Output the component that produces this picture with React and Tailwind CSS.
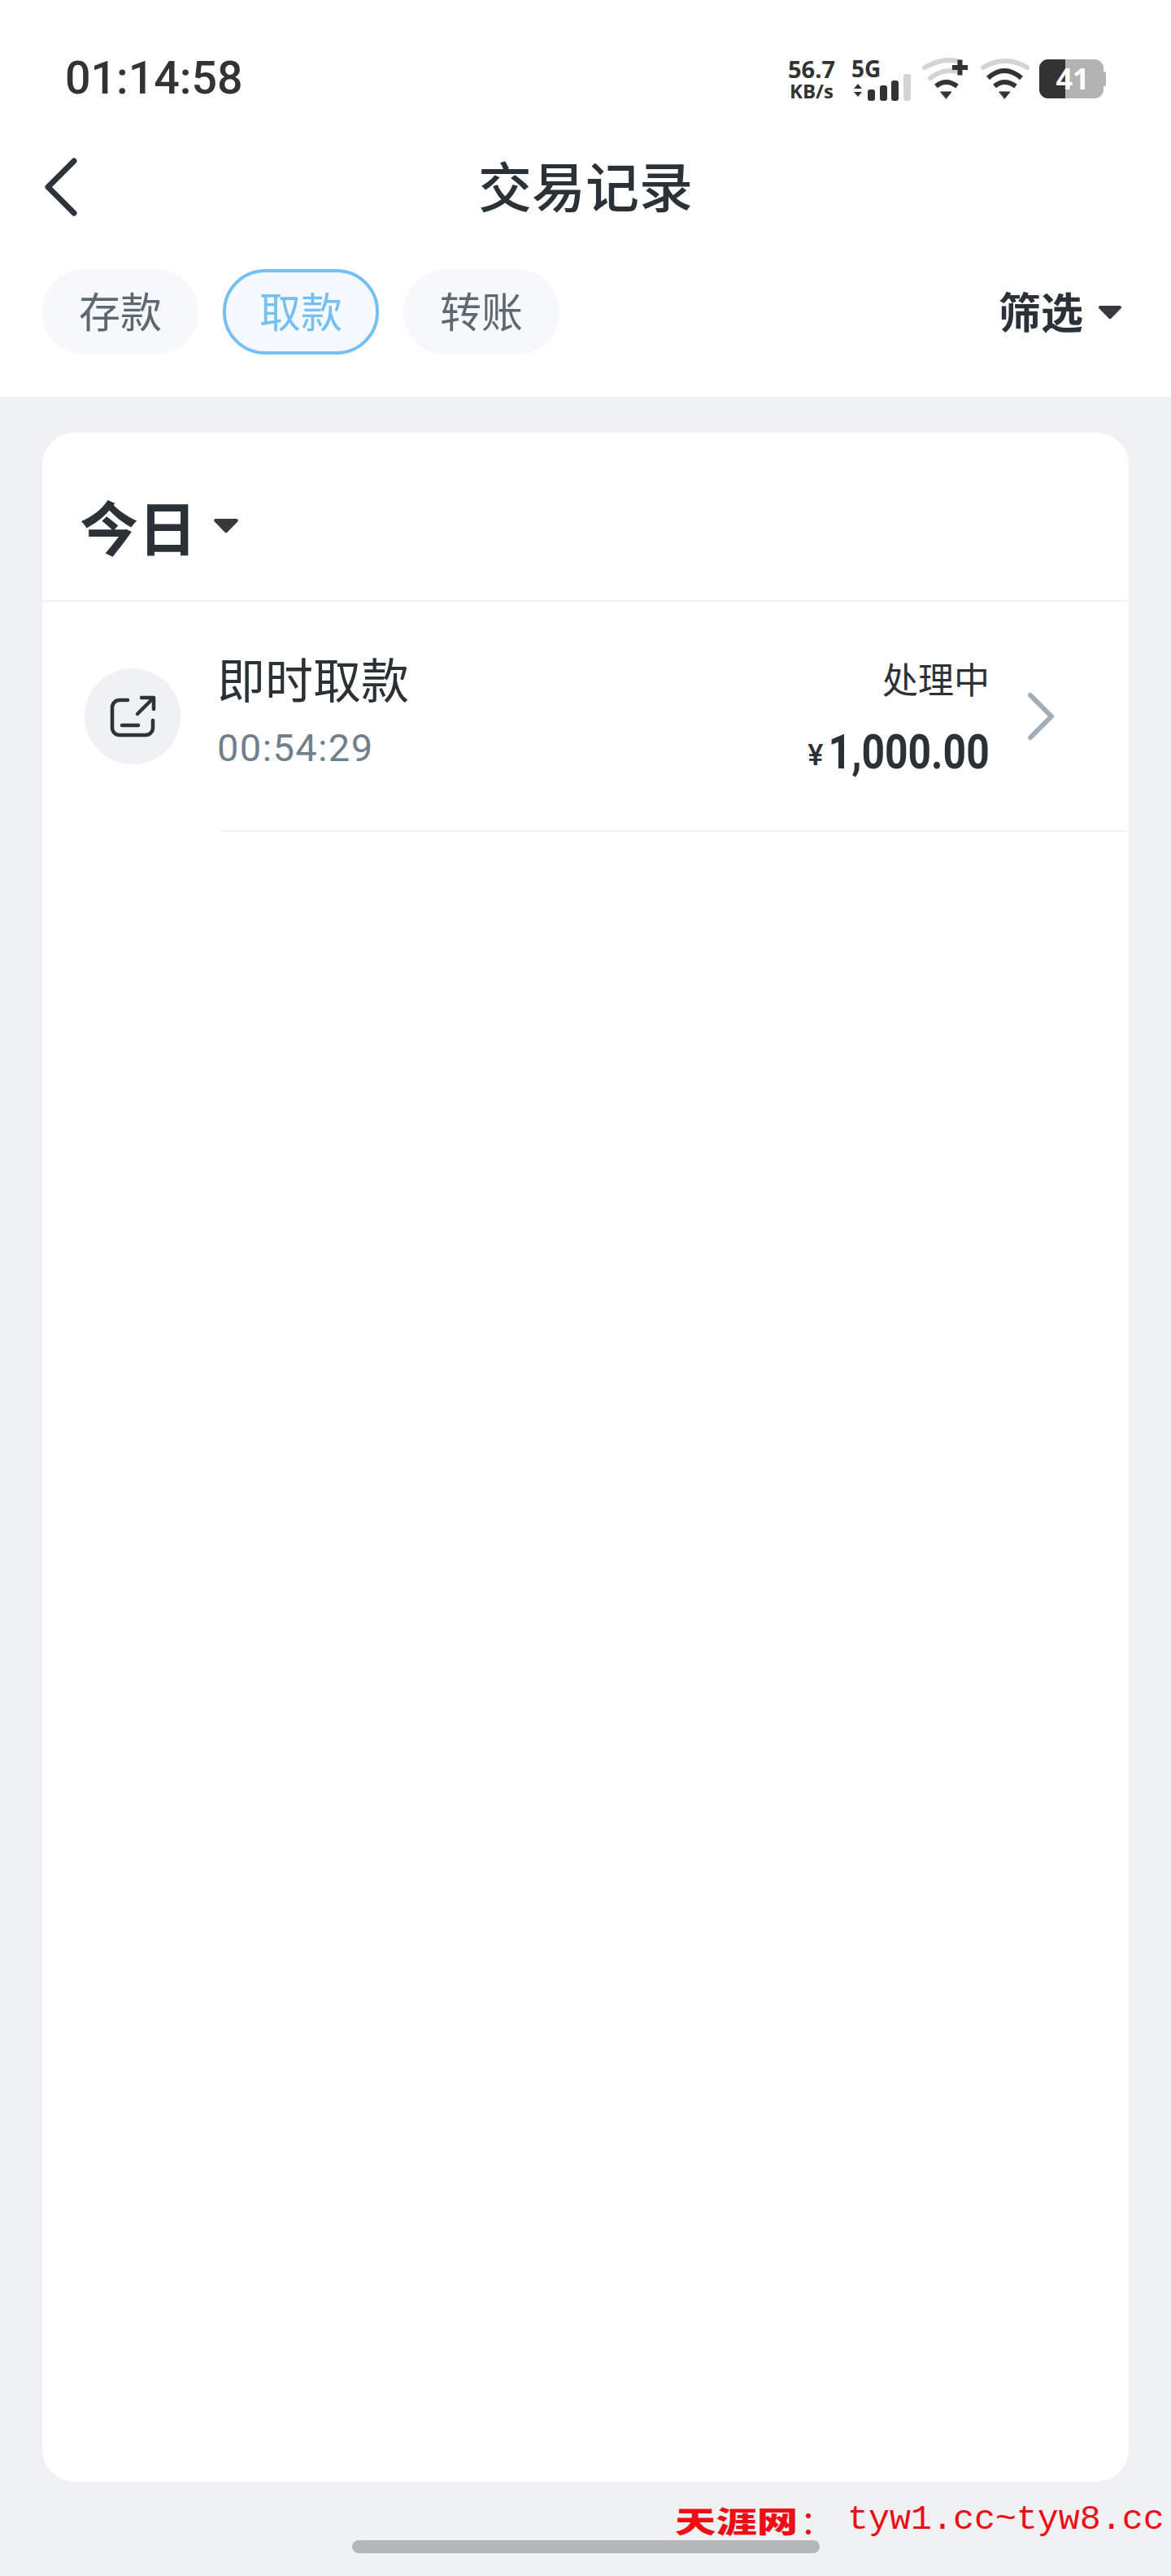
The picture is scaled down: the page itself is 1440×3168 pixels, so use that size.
const sans = { fontFamily: '"Noto Sans CJK SC", Roboto, sans-serif' };

// wifi glyph with the unused bars greyed out, optional plus badge
const Wifi = ({ plus, outer = '#d4d4d4', middle = '#333333' }) => (
  <svg width="68" height="56" viewBox="0 0 68 56" fill="none" strokeLinecap="round">
    {plus ? (
      <>
        <path d="M4 14Q25 2 44 6" stroke={outer} strokeWidth="6" />
        <path d="M11 27Q26 15 44 19" stroke={outer} strokeWidth="6" />
        <path d="M18 37Q30 27 44 37" stroke="#333333" strokeWidth="6" strokeLinecap="butt" />
        <path d="M38 14H57M47.500 4.500V23.500" stroke="#333333" strokeWidth="6" strokeLinecap="butt" />
      </>
    ) : (
      <>
        <path d="M4 14Q31 -2 58 14" stroke={outer} strokeWidth="6" />
        <path d="M10 27Q30 9 51 27" stroke={middle} strokeWidth="6" strokeLinecap="butt" />
        <path d="M18 37Q30 27 44 37" stroke="#333333" strokeWidth="6" strokeLinecap="butt" />
      </>
    )}
    <path d="M24 44H37L30.500 52Z" fill="#333333" stroke="#333333" strokeWidth="1" strokeLinejoin="round" />
  </svg>
);

const StatusBar = () => (
  <div className="flex items-center justify-between h-[194px] pl-[80px] pr-[80px]" style={sans}>
    <span className="text-[55.500px] font-medium leading-none text-[#333333] font-['Roboto']">01:14:58</span>
    <div className="flex items-center">
      <div className="flex flex-col items-center w-[60px] font-['Open_Sans'] font-bold text-[#333333]">
        <span className="text-[29px] leading-[30px]">56.7</span>
        <span className="text-[24px] leading-[24px]">KB/s</span>
      </div>
      <div className="flex flex-col ml-[19px] w-[74px] text-[#333333]">
        <span className="text-[28px] leading-[28px] font-bold font-['Open_Sans']">5G</span>
        <svg width="74" height="26" viewBox="0 0 74 26" className="overflow-visible">
          <path d="M3 11L8 5L13 11ZM3 15L8 21L13 15Z" fill="#333333" />
          <rect x="20" y="12" width="9" height="14" rx="3" fill="#333333" />
          <rect x="35" y="7" width="9" height="19" rx="3" fill="#333333" />
          <rect x="49" y="1" width="9" height="25" rx="3" fill="#333333" />
          <rect x="64" y="-7" width="9" height="33" rx="3" fill="#d4d4d4" />
        </svg>
      </div>
      <div className="ml-[12px]">
        <Wifi plus />
      </div>
      <div className="ml-[4px]">
        <Wifi />
      </div>
      {/* battery, filled part is drawn as the left dark half */}
      <div className="relative flex items-center ml-[5px]">
        <div className="flex w-[79px] h-[48px] rounded-[11px] overflow-hidden bg-[#b3b3b3]">
          <div className="w-[32px] h-full bg-[#333333]" />
        </div>
        <div className="w-[3px] h-[18px] bg-[#b3b3b3] rounded-r-[2px]" />
        <span className="absolute left-[20px] top-[1px] w-[42px] text-center text-[36px] leading-[46px] font-bold text-white font-['Open_Sans']">41</span>
      </div>
    </div>
  </div>
);

const Tab = ({ label, active }) => (
  <div
    className={`flex items-center justify-center w-[192px] h-[105px] pb-[4px] rounded-[52px] text-[51px] leading-none ${
      active ? 'bg-[#f4faff] border-[4px] border-[#74c0f5] text-[#74c0f5]' : 'bg-[#f7f8f9] text-[#5d6873]'
    }`}
  >
    {label}
  </div>
);

const Caret = ({ className }) => (
  <svg className={className} viewBox="0 0 30 18" fill="#363a3e">
    <path d="M3 1H27a2 2 0 0 1 1.500 3.300L16.500 16.500a2 2 0 0 1-3 0L1.500 4.300A2 2 0 0 1 3 1Z" />
  </svg>
);

const App = () => {
  return (
    <div className="w-[1440px] h-[3168px] bg-[#f0f1f3] overflow-hidden" style={sans}>
      <header className="bg-white h-[488px]">
        <StatusBar />
        <div className="relative flex items-center justify-center h-[72px]">
          <svg className="absolute left-[52px] top-0" width="48" height="72" viewBox="0 0 48 72" fill="none">
            <path d="M39 4L7 36L39 68" stroke="#2d333b" strokeWidth="7" strokeLinecap="round" strokeLinejoin="round" />
          </svg>
          <h1 className="text-[66px] font-medium leading-none text-[#2b3137] pb-[8px]">交易记录</h1>
        </div>
        <div className="flex items-center mt-[65px] pl-[52px] pr-[60px]">
          <div className="flex gap-[30px]">
            <Tab label="存款" />
            <Tab label="取款" active />
            <Tab label="转账" />
          </div>
          <div className="flex items-center ml-auto">
            <span className="text-[52px] font-bold leading-none text-[#2b3137] pb-[3px]">筛选</span>
            <Caret className="w-[30px] h-[18px] ml-[18px]" />
          </div>
        </div>
      </header>

      <main className="mt-[44px] mx-[52px] h-[2520px] bg-white rounded-[40px] overflow-hidden">
        <div className="flex items-center h-[208px] pl-[46px] pt-[22px] border-b-2 border-[#f2f3f4]">
          <span className="text-[72px] font-bold leading-none text-[#2b3137]">今日</span>
          <Caret className="w-[32px] h-[19px] ml-[20px]" />
        </div>

        <div className="flex items-center h-[281px] pl-[52px] pr-[91px]">
          <div className="flex items-center justify-center w-[118px] h-[118px] rounded-full bg-[#f0f1f3]">
            <svg width="60" height="52" viewBox="0 0 60 52" fill="none" stroke="#2d333b" strokeWidth="4.500" strokeLinecap="round" strokeLinejoin="round">
              <path d="M24 6H14a9 9 0 0 0-9 9V40a9 9 0 0 0 9 9H46a9 9 0 0 0 9-9V31" />
              <path d="M36 23L55 4M41 3H56V17" />
              <path d="M17 37H37" />
            </svg>
          </div>
          <div className="ml-[45px] flex flex-col pb-[14px]">
            <span className="text-[59px] leading-none text-[#2b3137]">即时取款</span>
            <span className="mt-[33px] text-[47px] leading-none tracking-[1.400px] text-[#6f7f8c] font-['Roboto']">00:54:29</span>
          </div>
          <div className="ml-auto flex flex-col items-end pt-[6px]">
            <span className="text-[44px] leading-none text-[#2b3137]">处理中</span>
            <div className="flex items-baseline mt-[39px] text-[#2b3137] font-['Roboto'] leading-none">
              <span className="text-[36px] font-medium -translate-y-[4px]">¥</span>
              <span className="inline-block text-[60px] font-bold origin-right scale-x-[0.83] -ml-[34px]">1,000.00</span>
            </div>
          </div>
          <svg className="ml-[46px]" width="34" height="60" viewBox="0 0 34 60" fill="none">
            <path d="M4 4L30 30L4 56" stroke="#a3adb8" strokeWidth="6" strokeLinecap="round" strokeLinejoin="round" />
          </svg>
        </div>
        <div className="ml-[221px] h-[2px] bg-[#f2f3f4]" />
      </main>

      {/* site stamp over the bottom edge of the page */}
      <div className="absolute left-[830px] top-[3073px] flex items-center text-[#ec0f17] whitespace-nowrap">
        <span className="inline-block w-[154px] text-[36px] font-black leading-[52px] origin-left scale-x-[1.4]">天涯网</span>
        <span className="w-[58px] text-[40px] leading-[52px]">：</span>
        <span className="text-[43.300px] leading-[52px] font-['Liberation_Mono']">tyw1.cc~tyw8.cc</span>
      </div>

      <div className="mt-[72px] mx-auto w-[575px] h-[16px] rounded-full bg-[#b5b6b8]" />
    </div>
  );
};

export default App;
